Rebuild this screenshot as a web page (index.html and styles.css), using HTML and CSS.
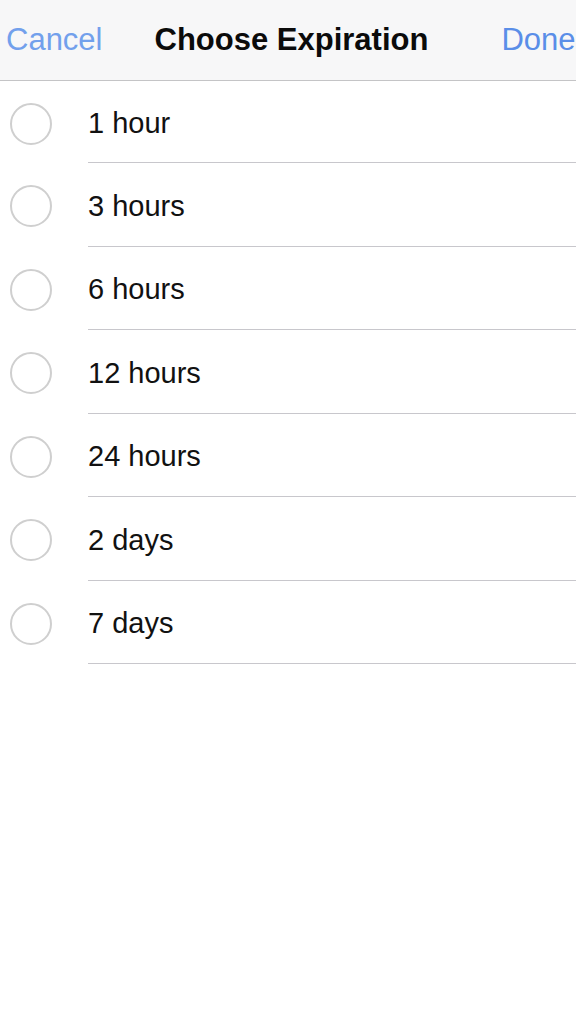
FILE: index.html
```html
<!DOCTYPE html>
<html>
<head>
<meta charset="utf-8">
<link rel="stylesheet" href="styles.css">
</head>
<body>
<header class="navbar">
  <span class="nav-btn cancel">Cancel</span>
  <span class="nav-title">Choose Expiration</span>
  <span class="nav-btn done">Done</span>
</header>
<ul class="list">
  <li class="row"><span class="radio"></span><span class="label">1 hour</span></li>
  <li class="row"><span class="radio"></span><span class="label">3 hours</span></li>
  <li class="row"><span class="radio"></span><span class="label">6 hours</span></li>
  <li class="row"><span class="radio"></span><span class="label">12 hours</span></li>
  <li class="row"><span class="radio"></span><span class="label">24 hours</span></li>
  <li class="row"><span class="radio"></span><span class="label">2 days</span></li>
  <li class="row"><span class="radio"></span><span class="label">7 days</span></li>
</ul>
</body>
</html>
```
FILE: styles.css
```css
html, body {
  margin: 0;
  padding: 0;
  background: #fff;
  font-family: "Liberation Sans", Arial, sans-serif;
  overflow: hidden;
  width: 576px;
}
.navbar {
  height: 80px;
  background: #f7f7f8;
  border-bottom: 1px solid #c4c4c6;
  display: flex;
  align-items: center;
  white-space: nowrap;
  overflow: hidden;
  padding-left: 6px;
}
.nav-btn {
  font-size: 31px;
}
.cancel {
  color: #72a0ec;
}
.nav-title {
  font-size: 31px;
  font-weight: bold;
  color: #0b0b0b;
  margin-left: 52px;
}
.done {
  color: #5a8ee8;
  margin-left: 73px;
}
.list {
  list-style: none;
  margin: 0;
  padding: 0;
}
.row {
  box-sizing: border-box;
  display: flex;
  align-items: center;
  height: 83.5px;
  padding-top: 3px;
  position: relative;
}
.row:first-child {
  height: 82px;
}
.row::after {
  content: "";
  position: absolute;
  left: 88px;
  right: 0;
  bottom: 0;
  height: 1px;
  background: #c8c7cc;
}
.radio {
  width: 38px;
  height: 38px;
  border: 2px solid #cfcfcf;
  border-radius: 50%;
  margin-left: 10px;
  flex: none;
}
.label {
  margin-left: 36px;
  font-size: 29px;
  color: #111;
}
```
